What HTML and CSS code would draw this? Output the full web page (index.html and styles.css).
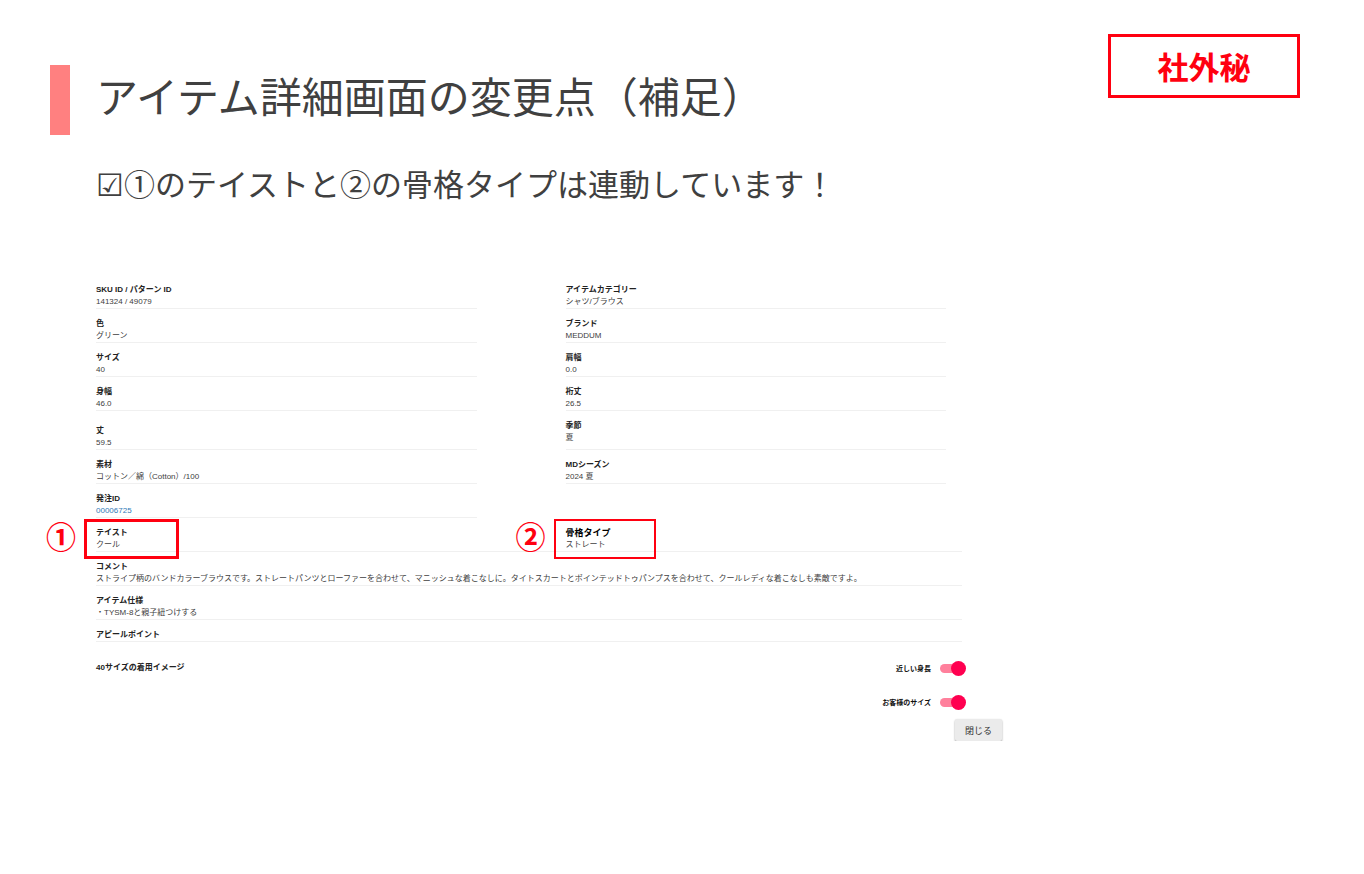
FILE: index.html
```
<!DOCTYPE html>
<html lang="ja">
<head>
  <meta charset="UTF-8" />
  <title>アイテム詳細画面の変更点（補足）</title>
  <link rel="stylesheet" href="styles.css">
</head>
<body>
  <header class="slide-header">
    <h1>アイテム詳細画面の変更点（補足）</h1>
    <div class="confidential">社外秘</div>
  </header>
  <p class="lead">☑①のテイストと②の骨格タイプは連動しています！</p>

  <main class="panel">
    <div class="details">
      <dl class="field"><dt>SKU ID / パターン ID</dt><dd>141324 / 49079</dd></dl>
      <dl class="field"><dt>アイテムカテゴリー</dt><dd>シャツ/ブラウス</dd></dl>
      <dl class="field"><dt>色</dt><dd>グリーン</dd></dl>
      <dl class="field"><dt>ブランド</dt><dd>MEDDUM</dd></dl>
      <dl class="field"><dt>サイズ</dt><dd>40</dd></dl>
      <dl class="field"><dt>肩幅</dt><dd>0.0</dd></dl>
      <dl class="field"><dt>身幅</dt><dd>46.0</dd></dl>
      <dl class="field"><dt>裄丈</dt><dd>26.5</dd></dl>
      <dl class="field"><dt>丈</dt><dd>59.5</dd></dl>
      <dl class="field field-tall"><dt>季節</dt><dd>夏</dd></dl>
      <dl class="field"><dt>素材</dt><dd>コットン／綿（Cotton）/100</dd></dl>
      <dl class="field"><dt>MDシーズン</dt><dd>2024 夏</dd></dl>
      <dl class="field"><dt>発注ID</dt><dd><a href="#">00006725</a></dd></dl>
    </div>

    <div class="wide">
      <div class="linked">
        <div class="field taste">
          <dl><dt>テイスト</dt><dd>クール</dd></dl>
          <span class="frame"></span><span class="number">①</span>
        </div>
        <div class="field body-type">
          <dl><dt>骨格タイプ</dt><dd>ストレート</dd></dl>
          <span class="frame"></span><span class="number">②</span>
        </div>
      </div>
      <dl class="field"><dt>コメント</dt><dd>ストライプ柄のバンドカラーブラウスです。ストレートパンツとローファーを合わせて、マニッシュな着こなしに。タイトスカートとポインテッドトゥパンプスを合わせて、クールレディな着こなしも素敵ですよ。</dd></dl>
      <dl class="field"><dt>アイテム仕様</dt><dd>・TYSM-8と親子紐つけする</dd></dl>
      <dl class="field"><dt>アピールポイント</dt></dl>
    </div>

    <div class="images">
      <h2>40サイズの着用イメージ</h2>
      <div class="switches">
        <label>近しい身長<input type="checkbox" class="switch" checked></label>
        <label>お客様のサイズ<input type="checkbox" class="switch" checked></label>
      </div>
    </div>
    <div class="actions">
      <button type="button" class="btn">閉じる</button>
    </div>
  </main>
</body>
</html>
```
FILE: styles.css
```
* {
  box-sizing: border-box;
}
body {
  margin: 0;
  background-color: #fff;
  color: #404040;
  font-family: "Liberation Sans", "Noto Sans CJK JP", sans-serif;
}
h1, h2, p, dl, dd {
  margin: 0;
}

/* 見出し */
.slide-header {
  display: flex;
  justify-content: space-between;
  align-items: flex-start;
  padding: 34px 64px 0 50px;
}
h1 {
  height: 70px;
  margin-top: 31px;
  padding-left: 26px;
  border-left: 20px solid #ff8080;
  font-family: "Noto Sans CJK JP", sans-serif;
  font-size: 42px;
  font-weight: 400;
  line-height: 60px;
}
.confidential {
  width: 192px;
  border: 3px solid #ff0010;
  color: #ff0010;
  font-family: "Noto Sans CJK JP", sans-serif;
  font-size: 31px;
  font-weight: bold;
  line-height: 58px;
  text-align: center;
}
.lead {
  margin: 24px 96px 0;
  font-family: "Noto Sans CJK JP", sans-serif;
  font-size: 31px;
  line-height: 48px;
}

/* アイテム詳細 */
.panel {
  margin: 68px 362px 0 96px;
  font-size: 8px;
  line-height: 12px;
}
.details {
  display: grid;
  grid-template-columns: 1fr 1fr;
  align-items: end;
  column-gap: 89px;
  padding-right: 56px;
}
.field {
  position: relative;
  padding-top: 9px;
  border-bottom: 1px solid #f0f0f0;
}
.field-tall {
  padding-bottom: 5px;
}
dt {
  color: #222;
  font-weight: bold;
}
.field a {
  color: #337ab7;
  text-decoration: none;
}
.wide {
  padding-right: 40px;
}
.linked {
  display: grid;
  grid-template-columns: 1fr 1fr;
  column-gap: 89px;
  padding-right: 16px;
  border-bottom: 1px solid #f0f0f0;
}
.linked .field {
  border-bottom: 0;
}

/* 赤枠と番号 */
.frame {
  position: absolute;
  top: 1px;
  left: -12px;
  width: 102px;
  height: 40px;
  border: 2px solid #ff0010;
}
.taste .frame {
  width: 95px;
  border-width: 3px;
}
.number {
  position: absolute;
  top: 2px;
  left: -50px;
  color: #ff0010;
  font-family: "Noto Sans CJK JP", sans-serif;
  font-size: 30px;
  font-weight: bold;
  line-height: 30px;
}
.body-type dt {
  color: #000;
  font-size: 9px;
}

/* 着用イメージ */
.images {
  display: flex;
  justify-content: space-between;
  padding: 19px 36px 0 0;
}
h2 {
  color: #222;
  font-size: 8px;
  line-height: 14px;
}
.switches {
  display: flex;
  flex-direction: column;
  align-items: flex-end;
  gap: 19px;
}
.switches label {
  display: flex;
  align-items: center;
  gap: 9px;
  color: #111;
  font-size: 7px;
  font-weight: bold;
}
.switch {
  appearance: none;
  display: grid;
  align-items: center;
  width: 26px;
  height: 15px;
  margin: 0;
}
.switch::before,
.switch::after {
  content: "";
  grid-area: 1 / 1;
}
.switch::before {
  width: 22px;
  height: 9px;
  border-radius: 5px;
  background-color: #ff809c;
}
.switch::after {
  justify-self: end;
  width: 15px;
  height: 15px;
  border-radius: 50%;
  background-color: #ff0050;
}
.actions {
  display: flex;
  justify-content: flex-end;
  padding-top: 9px;
}
.btn {
  width: 47px;
  height: 22px;
  padding: 0;
  border: 0;
  border-radius: 2px;
  background-color: #ebebeb;
  box-shadow: 0 1px 2px rgba(0, 0, 0, 0.4);
  color: #333;
  font-family: inherit;
  font-size: 9px;
}
```
